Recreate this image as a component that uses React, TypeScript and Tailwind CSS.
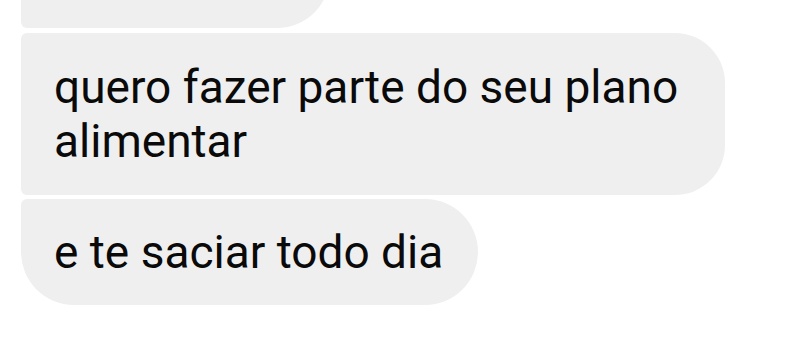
import React from "react";

export default function App() {
  return (
    <div className="w-[804px] h-[339px] overflow-hidden bg-white pl-[21px]" style={{ fontFamily: "Roboto, 'Noto Sans', sans-serif" }}>
      <div className="flex flex-col items-start">
        <div className="-mt-[78px] h-[106px] w-[309px] rounded-[53px] rounded-tl-[6px] rounded-bl-[6px] bg-[#efefef]" />
        <div className="mt-[5px] w-[704px] rounded-r-[50px] rounded-l-[6px] bg-[#efefef] px-[33px] py-[27px] text-[46px] leading-[54px] text-[#0a0a0a]">
          quero fazer parte do seu plano alimentar
        </div>
        <div className="mt-[4px] rounded-[53px] rounded-tl-[6px] bg-[#efefef] pl-[33px] pr-[35px] py-[26px] text-[46px] leading-[54px] text-[#0a0a0a]">
          e te saciar todo dia
        </div>
      </div>
    </div>
  );
}
